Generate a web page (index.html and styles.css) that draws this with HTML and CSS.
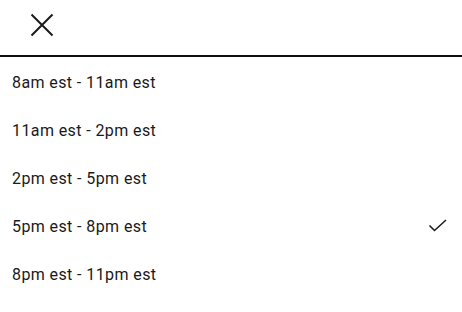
FILE: index.html
```html
<html>

<head>
  <title>Time slots</title>
  <meta charset="UTF-8">
  <meta name="viewport" content="width=device-width, initial-scale=1.0">
  <link rel="stylesheet" href="styles.css">
</head>

<body>
  <div id="app">
    <div class="header">
      <button class="btn-close" aria-label="close">
        <svg width="24" height="24" viewBox="0 0 24 24">
          <path d="M1.5 1.5L22.5 22.5M22.5 1.5L1.5 22.5" stroke="#1a1a1a" stroke-width="2" fill="none" />
        </svg>
      </button>
    </div>
    <ul class="slot-list">
      <li class="slot">8am est - 11am est</li>
      <li class="slot">11am est - 2pm est</li>
      <li class="slot">2pm est - 5pm est</li>
      <li class="slot selected">
        <span>5pm est - 8pm est</span>
        <svg class="check" width="20" height="16" viewBox="0 0 20 16">
          <path d="M1.5 7.5L6.5 12.5L18 2" stroke="#1a1a1a" stroke-width="1.5" fill="none" />
        </svg>
      </li>
      <li class="slot">8pm est - 11pm est</li>
    </ul>
  </div>
</body>

</html>
```

FILE: styles.css
```css
body {
  font-family: Roboto, "Liberation Sans", sans-serif;
  background-color: #ffffff;
  color: #1a1a1a;
  margin: 0;
  padding: 0;
}

#app {
  display: flex;
  flex-direction: column;
  width: 100%;
}

/* 顶部关闭栏 */
.header {
  height: 55px;
  display: flex;
  align-items: flex-start;
  border-bottom: 2px solid #111111;
}

.btn-close {
  background: none;
  border: none;
  padding: 0;
  margin: 13px 0 0 30px;
  width: 24px;
  height: 24px;
  cursor: pointer;
}

.btn-close svg {
  display: block;
}

/* 时间段列表 */
.slot-list {
  list-style: none;
  margin: 0;
  padding: 0;
}

.slot {
  box-sizing: border-box;
  height: 48px;
  display: flex;
  align-items: center;
  justify-content: space-between;
  padding: 2px 14px 0 12px;
  font-size: 16px;
  letter-spacing: 0.4px;
}

.check {
  display: block;
  margin-top: -1px;
}
```
